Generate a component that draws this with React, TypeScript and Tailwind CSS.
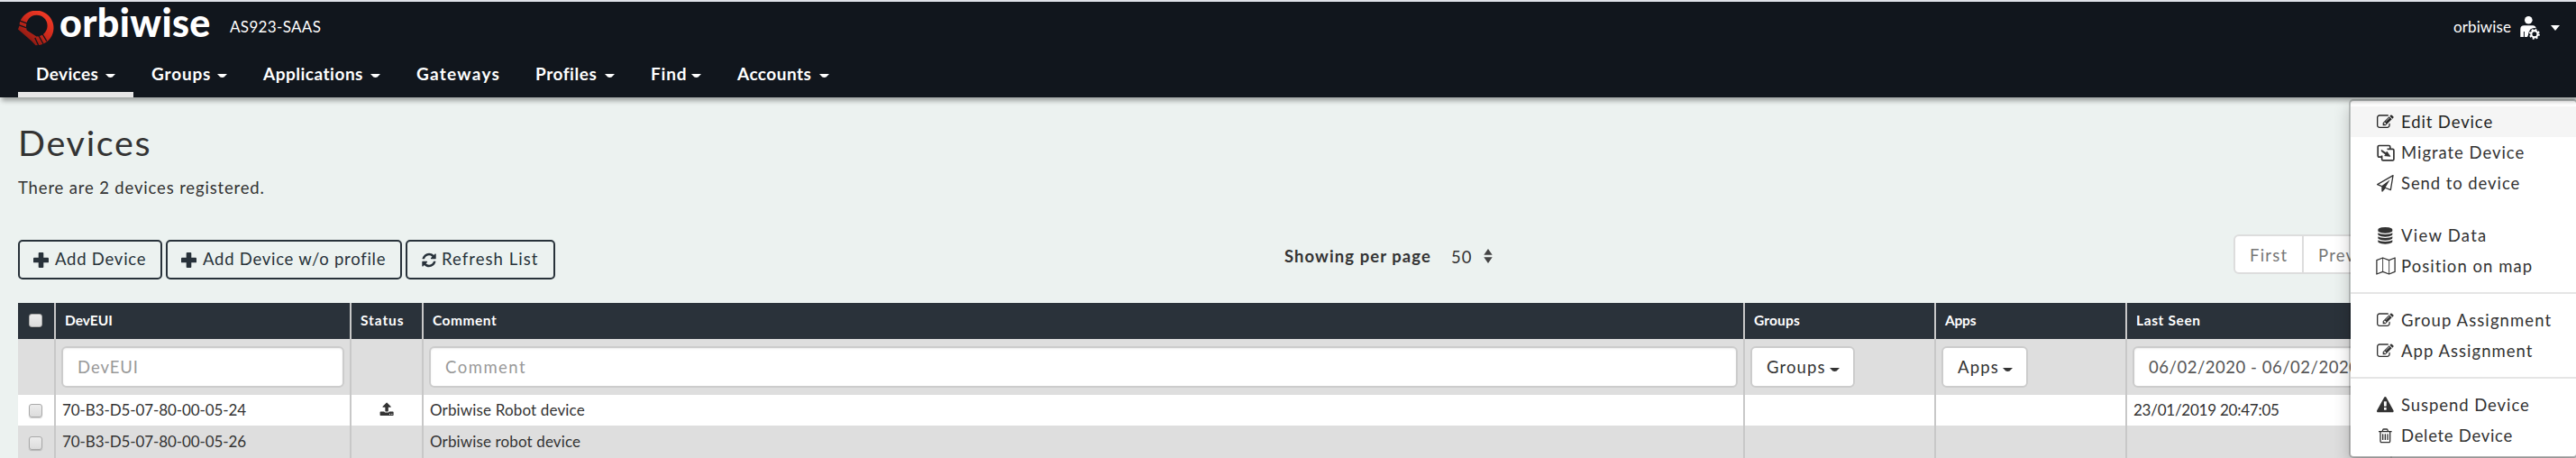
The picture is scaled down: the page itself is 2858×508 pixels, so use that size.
import React from "react";

const EDIT =
  "M888 1184l116-116-152-152-116 116v56h96v96h56zm440-720q-16-16-33 1l-350 350q-17 17-1 33t33-1l350-350q17-17 1-33zm80 594v190q0 119-84.5 203.5t-203.5 84.5h-832q-119 0-203.5-84.5t-84.5-203.5v-832q0-119 84.5-203.5t203.5-84.5h832q63 0 117 25 15 7 18 23 3 17-9 29l-49 49q-14 14-32 8-23-6-45-6h-832q-66 0-113 47t-47 113v832q0 66 47 113t113 47h832q66 0 113-47t47-113v-126q0-13 9-22l64-64q15-15 35-7t20 29zm-96-738l288 288-672 672h-288v-288zm444 132l-92 92-288-288 92-92q28-28 68-28t68 28l152 152q28 28 28 68t-28 68z";
const REFRESH =
  "M1639 1056q0 5-1 7-64 268-268 434.5t-478 166.5q-146 0-282.5-55t-243.5-157l-129 129q-19 19-45 19t-45-19-19-45v-448q0-26 19-45t45-19h448q26 0 45 19t19 45-19 45l-137 137q71 66 161 102t187 36q134 0 250-65t186-179q11-17 53-117 8-23 30-23h192q13 0 22.5 9.5t9.5 22.5zm25-800v448q0 26-19 45t-45 19h-448q-26 0-45-19t-19-45 19-45l138-138q-148-137-349-137-134 0-250 65t-186 179q-11 17-53 117-8 23-30 23h-199q-13 0-22.5-9.5t-9.5-22.5v-7q65-268 270-434.5t480-166.5q146 0 284 55.5t245 156.5l130-129q19-19 45-19t45 19 19 45z";
const UPLOAD =
  "M1344 1472q0-26-19-45t-45-19-45 19-19 45 19 45 45 19 45-19 19-45zm256 0q0-26-19-45t-45-19-45 19-19 45 19 45 45 19 45-19 19-45zm128-224v320q0 40-28 68t-68 28h-1472q-40 0-68-28t-28-68v-320q0-40 28-68t68-28h427q21 56 70.5 92t110.5 36h256q61 0 110.5-36t70.5-92h427q40 0 68 28t28 68zm-325-648q-17 40-59 40h-256v448q0 26-19 45t-45 19h-256q-26 0-45-19t-19-45v-448h-256q-42 0-59-40-17-39 14-69l448-448q18-19 45-19t45 19l448 448q31 30 14 69z";
const PLANE =
  "M1764 11q33 24 27 64l-256 1536q-5 29-32 45-14 8-31 8-11 0-24-5l-527-215-298 327q-18 21-47 21-14 0-23-4-19-7-30-23.5t-11-36.5v-452l-472-193q-37-14-40-55-3-39 32-59l1664-960q35-21 68 2zm-342 1499l221-1323-1434 827 336 137 863-639-478 797z";
const DATABASE =
  "M896 768q237 0 443-43t325-127v170q0 69-103 128t-280 93.5-385 34.5-385-34.5-280-93.5-103-128v-170q119 84 325 127t443 43zm0 768q237 0 443-43t325-127v170q0 69-103 128t-280 93.5-385 34.5-385-34.5-280-93.5-103-128v-170q119 84 325 127t443 43zm0-384q237 0 443-43t325-127v170q0 69-103 128t-280 93.5-385 34.5-385-34.5-280-93.5-103-128v-170q119 84 325 127t443 43zm0-1152q208 0 385 34.5t280 93.5 103 128v128q0 69-103 128t-280 93.5-385 34.5-385-34.5-280-93.5-103-128v-128q0-69 103-128t280-93.5 385-34.5z";
const WARNING =
  "M1024 1375v-190q0-14-9.5-23.5t-22.5-9.5h-192q-13 0-22.5 9.5t-9.5 23.5v190q0 14 9.5 23.5t22.5 9.5h192q13 0 22.5-9.5t9.5-23.5zm-2-374l18-459q0-12-10-19-13-11-24-11h-220q-11 0-24 11-10 7-10 21l17 457q0 10 10 16.5t24 6.5h185q14 0 23.5-6.5t10.5-16.5zm-14-934l768 1408q35 63-2 126-17 29-46.5 46t-63.5 17h-1536q-34 0-63.5-17t-46.5-46q-37-63-2-126l768-1408q17-31 47-49t65-18 65 18 47 49z";
const TRASH =
  "M704 736v576q0 14-9 23t-23 9h-64q-14 0-23-9t-9-23v-576q0-14 9-23t23-9h64q14 0 23 9t9 23zm256 0v576q0 14-9 23t-23 9h-64q-14 0-23-9t-9-23v-576q0-14 9-23t23-9h64q14 0 23 9t9 23zm256 0v576q0 14-9 23t-23 9h-64q-14 0-23-9t-9-23v-576q0-14 9-23t23-9h64q14 0 23 9t9 23zm128 724v-948h-896v948q0 22 7 40.5t14.5 27 10.5 8.5h832q3 0 10.5-8.5t14.5-27 7-40.5zm-672-1076h448l-48-117q-7-9-17-11h-317q-10 2-17 11zm928 32v64q0 14-9 23t-23 9h-96v948q0 83-47 143.5t-113 60.5h-832q-66 0-113-58.5t-47-141.5v-952h-96q-14 0-23-9t-9-23v-64q0-14 9-23t23-9h309l70-167q15-37 54-63t79-26h320q40 0 79 26t54 63l70 167h309q14 0 23 9t9 23z";

function Glyph({ d, className }: { d: string; className: string }) {
  return (
    <svg viewBox="0 0 1792 1792" fill="currentColor" className={className}>
      <path d={d} />
    </svg>
  );
}

const menuGlyph = "h-[18.67px] w-[18.67px] overflow-visible";

function PlusIcon() {
  return (
    <svg viewBox="0 0 17 17" className="h-[17px] w-[17px] shrink-0" fill="currentColor">
      <rect x="5.7" y="0" width="5.6" height="17" rx="0.9" />
      <rect x="0" y="5.7" width="17" height="5.6" rx="0.9" />
    </svg>
  );
}

function MapIcon() {
  return (
    <svg viewBox="0 0 22 20" className="h-5 w-[22px]" fill="none" stroke="currentColor" strokeWidth="1.3" strokeLinejoin="round">
      <path d="M0.9 3.6L7.6 1l7 2.6L21.1 1v15.4L14.6 19l-7-2.6L0.9 19z" />
      <path d="M7.6 1v15.4M14.6 3.6V19" strokeWidth="0.9" />
    </svg>
  );
}

function MigrateIcon() {
  return (
    <svg viewBox="0 0 20 19" className="h-[19px] w-5" fill="none" stroke="currentColor">
      <path d="M5 14.2H2.6a1.4 1.4 0 0 1-1.4-1.4V2.9a1.4 1.4 0 0 1 1.4-1.4h10.8a1.4 1.4 0 0 1 1.4 1.4V5" strokeWidth="1.7" />
      <path d="M11.500 5.400h6a1.400 1.400 0 0 1 1.400 1.400v9.600a1.400 1.400 0 0 1-1.400 1.400H7a1.400 1.400 0 0 1-1.400-1.400v-4" strokeWidth="1.7" />
      <path d="M5.200 6.200l5 3.400 1-1.600 3.800 5.400-6.400-0.600 1-1.600L5.200 8z" fill="currentColor" strokeWidth="0.6" />
    </svg>
  );
}

function Caret({ className }: { className?: string }) {
  return (
    <svg viewBox="0 0 11 4" className={`h-1 w-[11px] shrink-0 ${className ?? ""}`} fill="currentColor">
      <path d="M0 0h11L7.600 3.600Q5.500 4.400 3.400 3.600z" />
    </svg>
  );
}

function LogoMark() {
  return (
    <svg viewBox="0 0 40 39" className="h-[39px] w-10">
      <defs>
        <linearGradient id="ring" x1="0.85" y1="0.1" x2="0.2" y2="0.95">
          <stop offset="0" stopColor="#f23a26" />
          <stop offset="0.45" stopColor="#cf2a1c" />
          <stop offset="1" stopColor="#7c1610" />
        </linearGradient>
      </defs>
      <path
        fill="url(#ring)"
        fillRule="evenodd"
        d="M2 12.500A19.300 19.300 0 1 1 24 37.900L19.500 38.200 15 33.500 3.500 23.500 0 20.600 1.200 17.500zM9 17.500L9.600 21.400 20.500 28.400A11.800 11.800 0 1 0 9 17.500z"
      />
      <path d="M1.500 10.800l9.500 3.600M0.500 15.600l9 3.200M18.800 30l4.200 9M23 27.800l5 9M27.200 26l4.600 7.600" stroke="#11161d" strokeWidth="1.3" fill="none" />
    </svg>
  );
}

function UserGear() {
  return (
    <svg viewBox="0 0 26 28" className="h-7 w-[26px]" fill="white">
      <circle cx="11.300" cy="4.300" r="4.300" />
      <path d="M2.300 23V14.500q0-4.200 4.200-4.200h9.500q3.500 0 3.700 3.500L14 14l-4 9zM5.900 17v6h1V17z" fillRule="evenodd" />
      <circle cx="17.900" cy="19.800" r="6.700" fill="#11161d" />
      <circle cx="17.900" cy="19.800" r="3.600" fill="none" stroke="white" strokeWidth="2.200" />
      <circle cx="17.900" cy="19.800" r="5" fill="none" stroke="white" strokeWidth="1.900" strokeDasharray="2 1.927" />
    </svg>
  );
}

const nav = [
  { label: "Devices", box: "w-32 border-[#e6e6e6]", text: "tracking-[0.38px]", caret: true },
  { label: "Groups", box: "w-[124px] border-transparent", text: "tracking-[0.84px]", caret: true },
  { label: "Applications", box: "w-[170px] border-transparent", text: "tracking-[0.51px]", caret: true },
  { label: "Gateways", box: "w-[132px] border-transparent", text: "tracking-[1.27px]", caret: false },
  { label: "Profiles", box: "w-32 border-transparent", text: "tracking-[0.54px]", caret: true },
  { label: "Find", box: "w-[96px] border-transparent", text: "tracking-[0.83px]", caret: true },
  { label: "Accounts", box: "w-[142px] border-transparent", text: "tracking-[0.47px]", caret: true },
];

function Header() {
  return (
    <header className="relative z-20 h-[108px] border-t-2 border-[#dfe2e8] bg-[#11161d] text-white shadow-[2px_4px_5px_rgba(0,0,0,0.32)]">
      <div className="flex h-[58px] justify-between pr-[18px] pl-5">
        <div className="flex">
          <div className="pt-2.5">
            <LogoMark />
          </div>
          <div className="ml-1.5 h-[46px] w-[189px] text-[43px] leading-[46px] font-black tracking-[0.36px]">orbiwise</div>
          <div className="pt-[17px] text-[17px] leading-[22px] tracking-[0.34px]">AS923-SAAS</div>
        </div>
        <div className="flex">
          <div className="w-[72px] pt-[17px] text-[17px] leading-[22px] tracking-[0.11px]">orbiwise</div>
          <div className="pt-4">
            <UserGear />
          </div>
          <svg viewBox="0 0 10 6" className="mt-[26px] ml-2.5 h-1.5 w-2.5" fill="white">
            <path d="M0 0h10L5 6z" />
          </svg>
        </div>
      </div>
      <nav className="flex h-12 pl-5">
        {nav.map((n) => (
          <div key={n.label} className={`flex justify-between border-b-[6px] px-5 ${n.box}`}>
            <span className={`text-[19px] leading-[44px] font-bold ${n.text}`}>{n.label}</span>
            {n.caret && <Caret className="mt-[22px]" />}
          </div>
        ))}
      </nav>
    </header>
  );
}

const btn = "flex h-11 items-center rounded-[5px] border-2 border-[#28323a] pl-[15px] text-[18.5px] text-[#28323a]";

function Toolbar() {
  return (
    <div className="flex h-[76px] pl-5 text-[18.5px] text-[#333]">
      <div className="flex w-[1405px] gap-1 pt-1.5">
        <button className={`${btn} w-40 gap-[7px] tracking-[0.76px]`}>
          <PlusIcon />
          Add Device
        </button>
        <button className={`${btn} w-[262px] gap-[7px] tracking-[0.74px]`}>
          <PlusIcon />
          Add Device w/o profile
        </button>
        <button className={`${btn} w-[166px] gap-[5px] tracking-[1.05px]`}>
          <Glyph d={REFRESH} className="h-[19px] w-[18px] shrink-0" />
          Refresh List
        </button>
      </div>
      <div className="flex w-[1053px]">
        <span className="w-[185px] leading-[48px] font-bold tracking-[1.06px]">Showing per page</span>
        <span className="w-9 leading-[50px] tracking-[1.1px]">50</span>
        <svg viewBox="0 0 10 16" className="mt-4 h-4 w-2.5" fill="#444">
          <path d="M5 0l4.700 6.800H0.300zM5 16l4.700-6.800H0.300z" />
        </svg>
      </div>
      <div className="flex h-11 w-[380px] overflow-hidden rounded-l-[6px] border-2 border-[#ddd] bg-white leading-[42px] tracking-[1.25px] text-[#777]">
        <span className="w-[76px] border-r-2 border-[#ddd] pl-4">First</span>
        <span className="pl-4">Previous</span>
      </div>
    </div>
  );
}

function Check() {
  return <span className="block h-[15px] w-[15px] rounded-[3px] border border-[#a9a9a9] bg-linear-to-b from-[#ececec] to-[#dcdcdc] shadow-[0_1px_1px_rgba(0,0,0,0.2)]" />;
}

const cols = "grid grid-cols-[40px_328px_80px_1466px_212px_212px_294px_206px]";
const cell = "flex items-center border-l-2 border-[#c8c8c8] pl-1.5";
const th = "border-l-2 border-[#c8c8c8] pl-2.5 leading-[38px]";
const field = "h-[46px] rounded-[6px] border-2 border-[#ccc] bg-white pl-4 leading-[43px] shadow-[inset_0_1px_2px_rgba(0,0,0,0.08)]";
const drop = "flex h-[46px] rounded-[6px] border-2 border-[#ccc] bg-white pl-4 leading-[43px] text-[#333]";

function Table() {
  return (
    <div className="pl-5 text-[#333]">
      <div className={`${cols} h-10 bg-[#2a323a] text-[15.5px] font-bold text-white`}>
        <div className="pt-3 pl-3">
          <Check />
        </div>
        <div className={`${th} tracking-[0.02px]`}>DevEUI</div>
        <div className={`${th} tracking-[0.9px]`}>Status</div>
        <div className={`${th} tracking-[0.52px]`}>Comment</div>
        <div className={`${th} tracking-[0.17px]`}>Groups</div>
        <div className={`${th} tracking-[-0.22px]`}>Apps</div>
        <div className={`${th} tracking-[0.63px]`}>Last Seen</div>
        <div className={th} />
      </div>
      <div className={`${cols} h-[62px] bg-[#dedede] text-[18.5px]`}>
        <div />
        <div className={cell}>
          <div className={`${field} w-[314px] tracking-[0.95px] text-[#999]`}>DevEUI</div>
        </div>
        <div className={cell} />
        <div className={cell}>
          <div className={`${field} w-[1452px] tracking-[1.5px] text-[#999]`}>Comment</div>
        </div>
        <div className={cell}>
          <div className={`${drop} w-[116px] tracking-[1.12px]`}>
            <span className="w-[70px]">Groups</span>
            <Caret className="mt-[22px]" />
          </div>
        </div>
        <div className={cell}>
          <div className={`${drop} w-24 tracking-[1.19px]`}>
            <span className="w-[50px]">Apps</span>
            <Caret className="mt-[22px]" />
          </div>
        </div>
        <div className={cell}>
          <div className={`${field} w-[280px] overflow-hidden tracking-[0.52px] whitespace-nowrap text-[#555]`}>06/02/2020 - 06/02/2020</div>
        </div>
        <div className={cell} />
      </div>
      <div className={`${cols} h-[34px] bg-white text-[17px] leading-[33px]`}>
        <div className="pt-2.5 pl-3">
          <Check />
        </div>
        <div className="border-l-2 border-[#c8c8c8] pl-[7px] tracking-[-0.09px]">70-B3-D5-07-80-00-05-24</div>
        <div className="border-l-2 border-[#c8c8c8] pt-2 pl-[30.5px]">
          <Glyph d={UPLOAD} className="h-[16.2px] w-[16.2px]" />
        </div>
        <div className="border-l-2 border-[#c8c8c8] pl-[7px] tracking-[0.15px]">Orbiwise Robot device</div>
        <div className={cell} />
        <div className={cell} />
        <div className="border-l-2 border-[#c8c8c8] pl-[7px] tracking-[-0.24px]">23/01/2019 20:47:05</div>
        <div className={cell} />
      </div>
      <div className={`${cols} h-9 bg-[#dedede] text-[17px] leading-[36px]`}>
        <div className="pt-3 pl-3">
          <Check />
        </div>
        <div className="border-l-2 border-[#c8c8c8] pl-[7px] tracking-[-0.09px]">70-B3-D5-07-80-00-05-26</div>
        <div className={cell} />
        <div className="border-l-2 border-[#c8c8c8] pl-[7px] tracking-[0.13px]">Orbiwise robot device</div>
        <div className={cell} />
        <div className={cell} />
        <div className={cell} />
        <div className={cell} />
      </div>
    </div>
  );
}

function Item({ icon, label, className }: { icon: React.ReactNode; label: string; className: string }) {
  return (
    <div className={`flex h-[34px] items-center pl-[27px] ${className}`}>
      <span className="mr-[6px] flex w-[23px] justify-center">{icon}</span>
      <span className="leading-[34px]">{label}</span>
    </div>
  );
}

function ContextMenu() {
  return (
    <div className="absolute top-[110px] -right-0.5 z-10 h-[398px] w-[254px] rounded-[5px] border-2 border-black/20 bg-white bg-clip-padding pt-1.5 text-[18.5px] text-[#333] shadow-[0_8px_18px_rgba(0,0,0,0.2)]">
      <Item icon={<Glyph d={EDIT} className={menuGlyph} />} label="Edit Device" className="bg-[#f5f5f5] tracking-[0.88px] text-[#262626]" />
      <Item icon={<MigrateIcon />} label="Migrate Device" className="tracking-[0.96px]" />
      <Item icon={<Glyph d={PLANE} className={menuGlyph} />} label="Send to device" className="tracking-[0.92px]" />
      <Item icon={<Glyph d={DATABASE} className={menuGlyph} />} label="View Data" className="mt-6 tracking-[1.25px]" />
      <Item icon={<MapIcon />} label="Position on map" className="tracking-[1.04px]" />
      <div className="my-3 h-0.5 bg-[#e5e5e5]" />
      <Item icon={<Glyph d={EDIT} className={menuGlyph} />} label="Group Assignment" className="tracking-[1.09px]" />
      <Item icon={<Glyph d={EDIT} className={menuGlyph} />} label="App Assignment" className="tracking-[1.03px]" />
      <div className="my-3 h-0.5 bg-[#e5e5e5]" />
      <Item icon={<Glyph d={WARNING} className={menuGlyph} />} label="Suspend Device" className="tracking-[0.93px]" />
      <Item icon={<Glyph d={TRASH} className={menuGlyph} />} label="Delete Device" className="tracking-[0.7px]" />
    </div>
  );
}

export default function App() {
  return (
    <div className="relative h-[508px] w-[2858px] overflow-hidden bg-[#ecf2f0] font-[Lato,sans-serif]">
      <Header />
      <main>
        <div className="h-[152px] pt-[25px] pl-5 text-[#333]">
          <h1 className="text-[39.5px] leading-[49px] tracking-[1.7px]">Devices</h1>
          <p className="mt-3.5 text-[18.5px] leading-6 tracking-[0.84px]">There are 2 devices registered.</p>
        </div>
        <Toolbar />
        <Table />
      </main>
      <ContextMenu />
    </div>
  );
}
